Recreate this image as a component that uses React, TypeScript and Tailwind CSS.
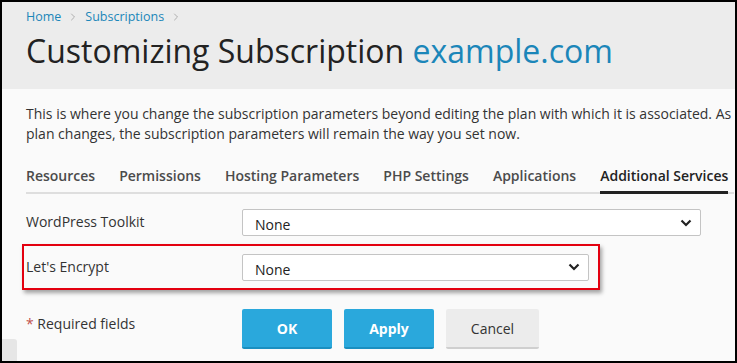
import { ChevronRight } from "lucide-react"

const tabs = ["Resources", "Permissions", "Hosting Parameters", "PHP Settings", "Applications", "Additional Services"]

const Chevron = () => (
    <svg width="12" height="8" viewBox="0 0 12 8" className="absolute right-[8px] top-1/2 -translate-y-1/2">
        <path d="M1.5 1.5 L6 6 L10.5 1.5" fill="none" stroke="#222" strokeWidth="2.2" />
    </svg>
)

const SelectBox = ({ width }: { width: string }) => (
    <div className={`relative h-[27px] ${width} rounded-[2px] border border-[#c4c4c4] bg-white`}>
        <span className="absolute left-[12px] top-[4px] text-[14px] text-[#222]">None</span>
        <Chevron />
    </div>
)

const App = () => {
    return (
        <div
            className="relative h-[363px] w-[737px] overflow-hidden border-2 border-black bg-[#fafafa]"
            style={{ fontFamily: '"Open Sans", "Noto Sans", sans-serif' }}
        >
            {/* header */}
            <div className="h-[87px] bg-[#ececec] pl-[24px] pt-[6px]">
                <div className="flex items-center gap-[6px] text-[12.5px] leading-[18px] text-[#1b86b9]">
                    <span>Home</span>
                    <ChevronRight size={12} strokeWidth={1.5} className="text-[#999]" />
                    <span>Subscriptions</span>
                    <ChevronRight size={12} strokeWidth={1.5} className="text-[#999]" />
                </div>
                <h1 className="mt-[5px] whitespace-nowrap text-[32px] leading-[40px] text-[#222]">
                    Customizing Subscription <span className="text-[#1b86b9]">example.com</span>
                </h1>
            </div>

            {/* body */}
            <div className="pl-[24px]">
                <p className="mt-[15px] whitespace-nowrap text-[14px] leading-[20px] text-[#333]">
                    <span className="block">This is where you change the subscription parameters beyond editing the plan with which it is associated. As</span>
                    <span className="block">plan changes, the subscription parameters will remain the way you set now.</span>
                </p>

                <div className="mt-[22px] flex w-[708px] gap-[24px] border-b-2 border-[#dedede] text-[14px] font-semibold leading-[20px] text-[#4b4b4b]">
                    {tabs.map((tab, i) => (
                        <div
                            key={tab}
                            className={`whitespace-nowrap pb-[5px] ${i === tabs.length - 1 ? "-mb-[2px] border-b-[3px] border-[#222] text-[#222]" : ""}`}
                        >
                            {tab}
                        </div>
                    ))}
                </div>

                <div className="mt-[15px] flex items-center">
                    <div className="w-[216px] -translate-y-[1px] text-[14px] text-[#333]">WordPress Toolkit</div>
                    <SelectBox width="w-[459px]" />
                </div>

                <div className="-ml-[4px] mt-[8px] flex h-[46px] w-[578px] items-center border-2 border-[#e3000f] pl-[2px] shadow-[2px_3px_4px_rgba(0,0,0,0.35)]">
                    <div className="w-[216px] -translate-y-[1px] text-[14px] text-[#333]">Let's Encrypt</div>
                    <SelectBox width="w-[347px]" />
                </div>

                <div className="mt-[19px] flex items-start">
                    <div className="w-[216px] pt-[4px] text-[14px] text-[#333]">
                        <span className="text-[#c0504d]">*</span> Required fields
                    </div>
                    <div className="flex gap-[12px]">
                        <button className="h-[40px] w-[90px] rounded-[2px] border-b-2 border-[#1a8fc0] bg-[#2aa8dc] text-[14px] font-bold text-white">OK</button>
                        <button className="h-[40px] w-[90px] rounded-[2px] border-b-2 border-[#1a8fc0] bg-[#2aa8dc] text-[14px] font-bold text-white">Apply</button>
                        <button className="h-[40px] w-[93px] rounded-[2px] border-b-2 border-[#cfcfcf] bg-[#ececec] text-[14px] text-[#333]">Cancel</button>
                    </div>
                </div>
            </div>

            <div className="absolute bottom-0 left-0 h-[22px] w-[15px] rounded-tr-[3px] bg-[#e6e6e6]" />
        </div>
    )
}

export default App
